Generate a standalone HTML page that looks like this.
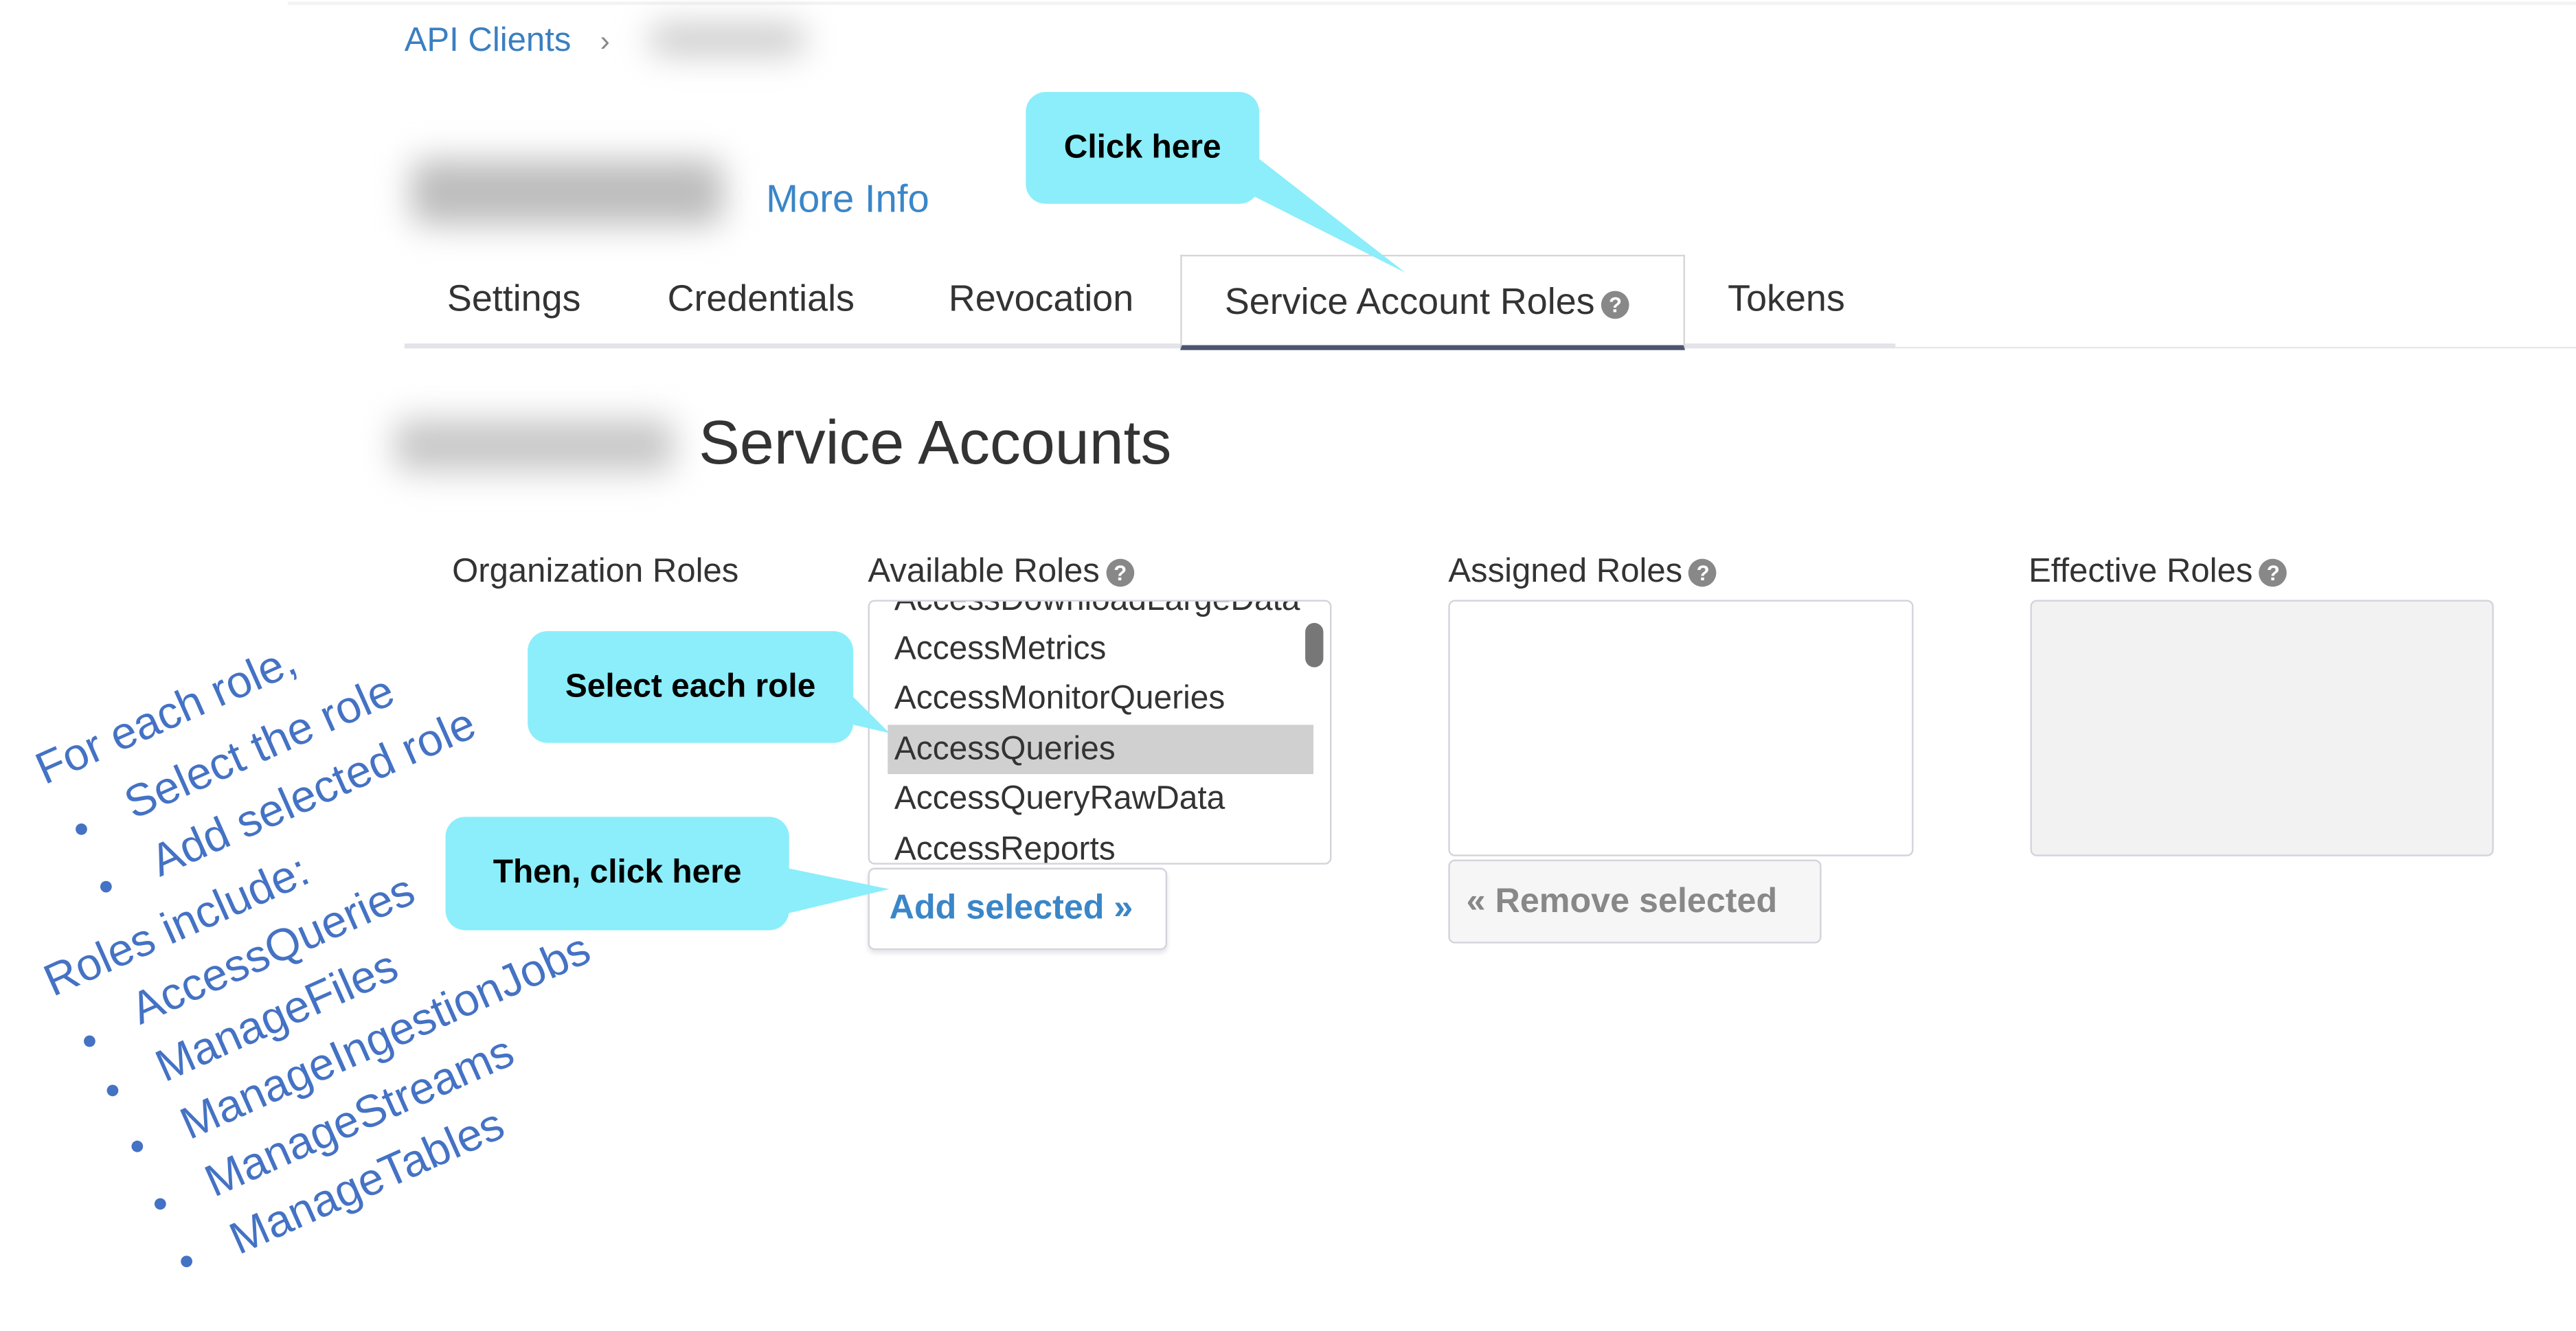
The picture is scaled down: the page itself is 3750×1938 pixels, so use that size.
<!DOCTYPE html>
<html><head><meta charset="utf-8">
<style>
html,body{margin:0;padding:0;background:#fff;width:3750px;height:1937px;overflow:hidden}
#s{position:absolute;left:0;top:0;width:1567px;height:810px;transform:scale(2.3931);transform-origin:0 0;font-family:"Liberation Sans",sans-serif;color:#333}
.a{position:absolute;white-space:nowrap}
.blur{position:absolute;background:#ccc;filter:blur(10px);border-radius:8px}
.q{display:inline-block;width:17px;height:17px;border-radius:50%;background:#888;color:#fff;font-size:13px;font-weight:bold;text-align:center;line-height:17px;vertical-align:1px;margin-left:4px}
.call{position:absolute;background:#8beefa;border-radius:12px;font-weight:bold;font-size:20px;color:#000;display:flex;align-items:center;justify-content:center}
.blue{position:absolute;white-space:nowrap;color:#4472c4;font-size:27.5px;transform:rotate(-24deg);transform-origin:0 100%}
.dot{position:absolute;width:7px;height:7px;border-radius:50%;background:#4472c4}
.it{position:absolute;left:15px;font-size:20px;color:#333}
</style></head><body><div id="s">
<div class="a" style="left:175px;top:1px;width:1392px;height:2px;background:#f3f3f3"></div>
<div class="a" style="left:246px;top:13px;font-size:20.5px;color:#3a7fc1">API Clients</div>
<div class="a" style="left:365px;top:15px;font-size:18px;color:#888">›</div>
<div class="blur" style="left:395px;top:15px;width:95px;height:18px;background:#c8c8c8"></div>
<div class="blur" style="left:250px;top:97px;width:190px;height:40px;background:#bdbdbd"></div>
<div class="a" style="left:466px;top:108px;font-size:23.5px;color:#3a86c8">More Info</div>
<div class="a" style="left:246px;top:209px;width:907px;height:3px;background:#e3e4ea"></div>
<div class="a" style="left:1153px;top:211px;width:414px;height:1px;background:#e8e8e8"></div>
<div class="a" style="left:272px;top:169px;font-size:22.5px">Settings</div>
<div class="a" style="left:406px;top:169px;font-size:22.5px">Credentials</div>
<div class="a" style="left:577px;top:169px;font-size:22.5px">Revocation</div>
<div class="a" style="left:718px;top:155px;width:305px;height:54px;border:1px solid #d6d6d6;border-bottom:3px solid #4a5570;background:#fff"></div>
<div class="a" style="left:745px;top:171px;font-size:22.5px">Service Account Roles<span class="q">?</span></div>
<div class="a" style="left:1051px;top:169px;font-size:22.5px">Tokens</div>
<div class="blur" style="left:240px;top:255px;width:170px;height:32px;background:#c8c8c8"></div>
<div class="a" style="left:425px;top:248px;font-size:37.5px;color:#333">Service Accounts</div>
<div class="a" style="left:275px;top:336px;font-size:20.5px">Organization Roles</div>
<div class="a" style="left:528px;top:336px;font-size:20.5px">Available Roles<span class="q">?</span></div>
<div class="a" style="left:881px;top:336px;font-size:20.5px">Assigned Roles<span class="q">?</span></div>
<div class="a" style="left:1234px;top:336px;font-size:20.5px">Effective Roles<span class="q">?</span></div>
<div class="a" style="left:528px;top:365px;width:280px;height:159px;border:1px solid #d3d3dc;border-radius:4px;overflow:hidden;background:#fff">
 <div class="a" style="left:11px;top:75px;width:259px;height:30px;background:#d0d0d0"></div>
 <div class="it" style="top:-12px">AccessDownloadLargeData</div>
 <div class="it" style="top:18px">AccessMetrics</div>
 <div class="it" style="top:48px">AccessMonitorQueries</div>
 <div class="it" style="top:79px">AccessQueries</div>
 <div class="it" style="top:109px">AccessQueryRawData</div>
 <div class="it" style="top:140px">AccessReports</div>
 <div class="a" style="left:265px;top:13px;width:11px;height:27px;border-radius:6px;background:#777"></div>
</div>
<div class="a" style="left:528px;top:528px;width:180px;height:48px;border:1px solid #d3d3dc;border-radius:4px;box-shadow:0 2px 3px #e5e5ea;font-size:21px;font-weight:bold;color:#3a86c8;line-height:48px;text-indent:12px">Add selected »</div>
<div class="a" style="left:881px;top:365px;width:281px;height:154px;border:1px solid #d3d3dc;border-radius:4px;background:#fff"></div>
<div class="a" style="left:881px;top:523px;width:225px;height:49px;border:1px solid #d3d3dc;border-radius:4px;background:#f6f6f6;font-size:21px;font-weight:bold;color:#888;line-height:49px;text-indent:10px">« Remove selected</div>
<div class="a" style="left:1235px;top:365px;width:280px;height:154px;border:1px solid #d3d3dc;border-radius:4px;background:#f2f2f2"></div>

<svg class="a" style="left:0;top:0" width="1567" height="810">
 <polygon points="760,92 760,118 855,166" fill="#8beefa"/>
 <polygon points="515,420 515,440 541,446" fill="#8beefa"/>
 <polygon points="478,528 478,556 541,541" fill="#8beefa"/>
</svg>
<div class="call" style="left:624px;top:56px;width:142px;height:68px">Click here</div>
<div class="call" style="left:321px;top:384px;width:198px;height:68px">Select each role</div>
<div class="call" style="left:271px;top:497px;width:209px;height:69px">Then, click here</div>

<div class="blue" style="left:30px;top:452px">For each role,</div>
<div class="blue" style="left:84px;top:473px">Select the role</div>
<div class="blue" style="left:100px;top:508px">Add selected role</div>
<div class="blue" style="left:35px;top:581px">Roles include:</div>
<div class="blue" style="left:88px;top:598px">AccessQueries</div>
<div class="blue" style="left:103px;top:633px">ManageFiles</div>
<div class="blue" style="left:118px;top:668px">ManageIngestionJobs</div>
<div class="blue" style="left:133px;top:703px">ManageStreams</div>
<div class="blue" style="left:148px;top:738px">ManageTables</div>
<div class="dot" style="left:46px;top:501px"></div>
<div class="dot" style="left:61px;top:536px"></div>
<div class="dot" style="left:51px;top:630px"></div>
<div class="dot" style="left:65px;top:660px"></div>
<div class="dot" style="left:80px;top:694px"></div>
<div class="dot" style="left:94px;top:729px"></div>
<div class="dot" style="left:110px;top:764px"></div>
</div></body></html>
